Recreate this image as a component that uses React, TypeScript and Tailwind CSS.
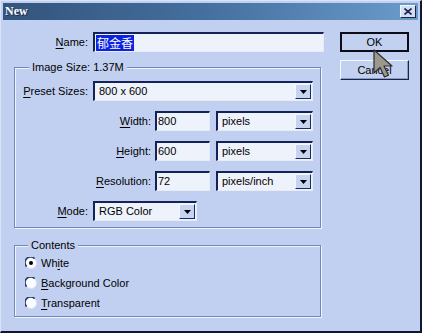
import React from "react";

const DropArrow = () => (
  <div className="w-[16px] h-[15px] shrink-0 flex items-center justify-center bg-[#c6d4f1] border border-t-[#f4f7fd] border-l-[#f4f7fd] border-r-[#1c2a5c] border-b-[#1c2a5c]">
    <svg width="7" height="4" viewBox="0 0 7 4">
      <path d="M0 0h7L3.5 4z" fill="#000" />
    </svg>
  </div>
);

const Select = ({ value, w }: { value: string; w: string }) => (
  <div className={`${w} h-[20px] flex items-center bg-[#eef2fb] border-t-2 border-l-2 border-r border-b border-t-[#14225a] border-l-[#14225a] border-r-[#e6ecf8] border-b-[#e6ecf8] pl-[4px] pr-[1px]`}>
    <span className="flex-1 truncate">{value}</span>
    <DropArrow />
  </div>
);

const Field = ({ value }: { value: string }) => (
  <div className="w-[55px] h-[20px] flex items-center bg-[#eef2fb] border-t-2 border-l-2 border-r border-b border-t-[#14225a] border-l-[#14225a] border-r-[#e6ecf8] border-b-[#e6ecf8] pl-[1px]">
    {value}
  </div>
);

const Acc = ({ pre = "", u, post }: { pre?: string; u: string; post: string }) => (
  <>
    {pre}
    <span className="underline underline-offset-[2px]">{u}</span>
    {post}
  </>
);

const Radio = ({ checked, children }: { checked?: boolean; children: React.ReactNode }) => (
  <div className="h-[20px] flex items-center pl-[10px]">
    <svg width="12" height="12" viewBox="0 0 12 12" className="shrink-0">
      <circle cx="6" cy="6" r="5.5" fill="#fbfcff" />
      <path d="M1.6 9.6A5.3 5.3 0 0 1 9.6 1.6" stroke="#2f3c66" strokeWidth="1.6" fill="none" />
      <path d="M10.6 3.2A5.3 5.3 0 0 1 3.2 10.6" stroke="#d9e2f5" strokeWidth="1" fill="none" />
      {checked && <circle cx="6" cy="6" r="2" fill="#000" />}
    </svg>
    <span className="ml-[4px]">{children}</span>
  </div>
);

const Group = ({ title, h, children, legendLeft }: { title: string; h: string; children: React.ReactNode; legendLeft: string }) => (
  <div className={`relative w-[307px] ${h} border border-[#7088bb] shadow-[1px_1px_0_#eef3fc,inset_1px_1px_0_#eef3fc]`}>
    <span className={`absolute top-[-8px] ${legendLeft} px-[3px] bg-[#c1d0f0] leading-[14px]`}>{title}</span>
    {children}
  </div>
);

export default function App() {
  return (
    <div className="relative w-[422px] h-[333px] overflow-hidden bg-[#c1d0f0] border-t border-l border-r-2 border-b-2 border-t-[#dbe4f7] border-l-[#dbe4f7] border-r-[#101830] border-b-[#101830] p-[2px] font-['Liberation_Sans',Tahoma,sans-serif] text-[11px] text-black leading-[13px]">
      {/* Title bar */}
      <div className="h-[17px] flex items-center justify-between bg-gradient-to-r from-[#33547c] via-[#45709f] to-[#6b9bcc] pl-[2px] pr-[2px]">
        <span className="font-['Liberation_Serif',serif] font-bold text-[12px] text-white [text-shadow:1px_1px_0_#1c2f4a]">New</span>
        <div className="w-[16px] h-[13px] flex items-center justify-center bg-[#d3def3] border border-t-[#f4f7fd] border-l-[#f4f7fd] border-r-[#1a2348] border-b-[#1a2348]">
          <svg width="8" height="7" viewBox="0 0 8 7">
            <path d="M0.5 0.5L7.5 6.5M7.5 0.5L0.5 6.5" stroke="#1a2348" strokeWidth="1.6" />
          </svg>
        </div>
      </div>

      {/* Body */}
      <div className="flex">
        <div className="ml-[11px] pt-[12px] w-[310px]">
          {/* Name */}
          <div className="flex items-center">
            <span className="w-[74px] text-right"><Acc u="N" post="ame:" /></span>
            <div className="ml-[5px] w-[231px] h-[20px] flex items-center bg-[#eef2fb] border-t-2 border-l-2 border-r border-b border-t-[#14225a] border-l-[#14225a] border-r-[#e6ecf8] border-b-[#e6ecf8] pl-[1px]">
              <span className="bg-[#0b22e0] text-white px-[1px] leading-[16px] text-[12px] font-['Noto_Sans_CJK_SC',sans-serif]">郁金香</span>
            </div>
          </div>

          {/* Image size */}
          <div className="mt-[15px]">
            <Group title="Image Size: 1.37M" h="h-[161px]" legendLeft="left-[14px]">
              <div className="pt-[13px] flex flex-col gap-[10px]">
                <div className="flex items-center">
                  <span className="w-[73px] text-right"><Acc u="P" post="reset Sizes:" /></span>
                  <div className="ml-[5px]"><Select value="800 x 600" w="w-[220px]" /></div>
                </div>
                <div className="flex items-center">
                  <span className="w-[136px] text-right"><Acc u="W" post="idth:" /></span>
                  <div className="ml-[4px]"><Field value="800" /></div>
                  <div className="ml-[6px]"><Select value="pixels" w="w-[97px]" /></div>
                </div>
                <div className="flex items-center">
                  <span className="w-[136px] text-right"><Acc u="H" post="eight:" /></span>
                  <div className="ml-[4px]"><Field value="600" /></div>
                  <div className="ml-[6px]"><Select value="pixels" w="w-[97px]" /></div>
                </div>
                <div className="flex items-center">
                  <span className="w-[136px] text-right"><Acc u="R" post="esolution:" /></span>
                  <div className="ml-[4px]"><Field value="72" /></div>
                  <div className="ml-[6px]"><Select value="pixels/inch" w="w-[97px]" /></div>
                </div>
                <div className="flex items-center">
                  <span className="w-[73px] text-right"><Acc u="M" post="ode:" /></span>
                  <div className="ml-[5px]"><Select value="RGB Color" w="w-[104px]" /></div>
                </div>
              </div>
            </Group>
          </div>

          {/* Contents */}
          <div className="mt-[17px]">
            <Group title="Contents" h="h-[72px]" legendLeft="left-[13px]">
              <div className="pt-[7px] flex flex-col">
                <Radio checked><Acc pre="Wh" u="i" post="te" /></Radio>
                <Radio><Acc u="B" post="ackground Color" /></Radio>
                <Radio><Acc u="T" post="ransparent" /></Radio>
              </div>
            </Group>
          </div>
        </div>

        {/* Buttons */}
        <div className="ml-[16px] pt-[12px] flex flex-col gap-[8px]">
          <div className="w-[69px] h-[20px] border-2 border-[#0c0c18] bg-[#c3d1f0] flex items-center justify-center">OK</div>
          <div className="w-[69px] h-[20px] border border-t-[#f4f7fd] border-l-[#f4f7fd] border-r-[#1a2348] border-b-[#1a2348] bg-[#c3d1f0] flex items-center justify-center shadow-[inset_-1px_-1px_0_#8a9cc6]">Cancel</div>
        </div>
      </div>

      {/* Mouse pointer */}
      <svg className="absolute left-[372px] top-[48px]" width="22" height="30" viewBox="0 0 22 30">
        <path d="M1 1L1 24L7 18.5L11.5 28L15.5 26.3L11 17L19 17Z" fill="#9c988c" stroke="#2e2e2e" strokeWidth="1.2" strokeLinejoin="round" />
      </svg>
    </div>
  );
}
